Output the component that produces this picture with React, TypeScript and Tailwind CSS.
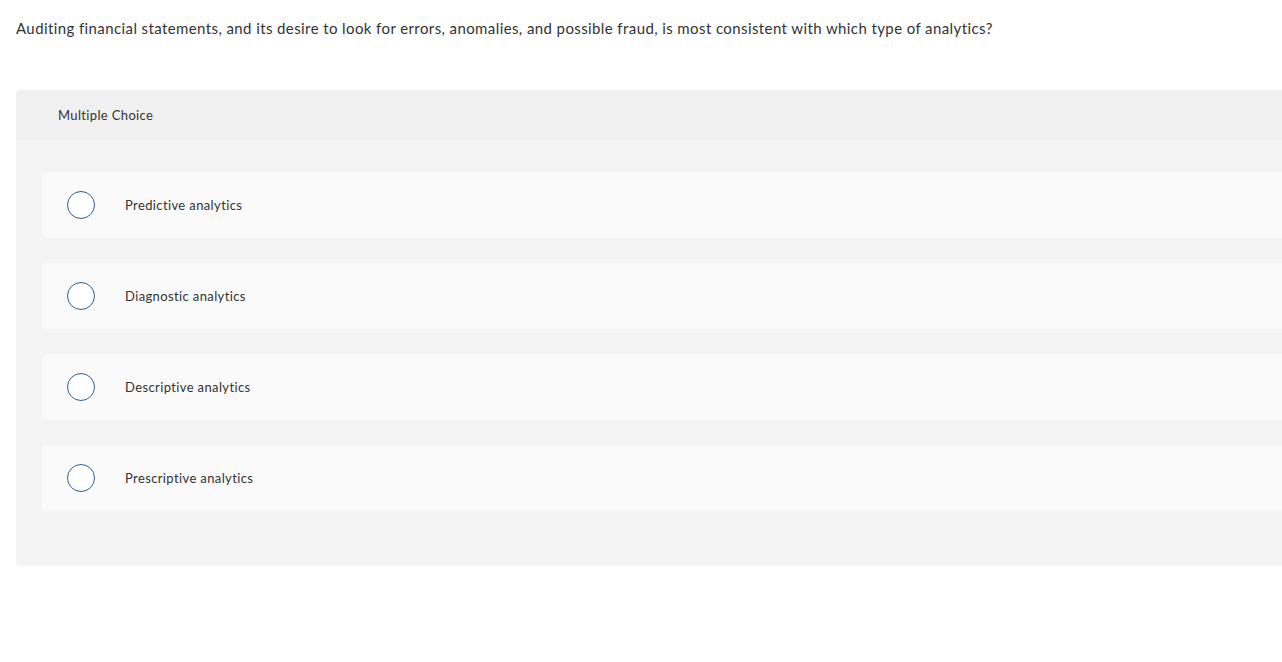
import React from "react";

const options = [
  "Predictive analytics",
  "Diagnostic analytics",
  "Descriptive analytics",
  "Prescriptive analytics",
];

export default function App() {
  return (
    <div className="w-[1282px] h-[662px] overflow-hidden bg-white text-[#333] font-['Lato',sans-serif]">
      <p className="pl-4 pt-[18px] text-[15px] leading-[20px] tracking-[0.4px]">
        Auditing financial statements, and its desire to look for errors, anomalies, and possible fraud, is most consistent with which type of analytics?
      </p>

      <div className="ml-4 mt-[52px] w-[1300px] rounded bg-[#f4f4f4] overflow-hidden">
        <div className="h-[50px] bg-[#f0f0f0] flex items-center pl-[42px] pt-px text-[13px] tracking-[0.35px]">
          Multiple Choice
        </div>
        <div className="pt-8 pb-[55px] pl-[26px] flex flex-col gap-[25px]">
          {options.map((opt) => (
            <div
              key={opt}
              className="h-[66px] rounded bg-[#fafafa] flex items-center pl-[25px]"
            >
              <span className="w-[28px] h-[28px] rounded-full border border-[#2f5f8f] bg-white shrink-0" />
              <span className="ml-[30px] pt-px text-[13px] tracking-[0.38px]">{opt}</span>
            </div>
          ))}
        </div>
      </div>
    </div>
  );
}
